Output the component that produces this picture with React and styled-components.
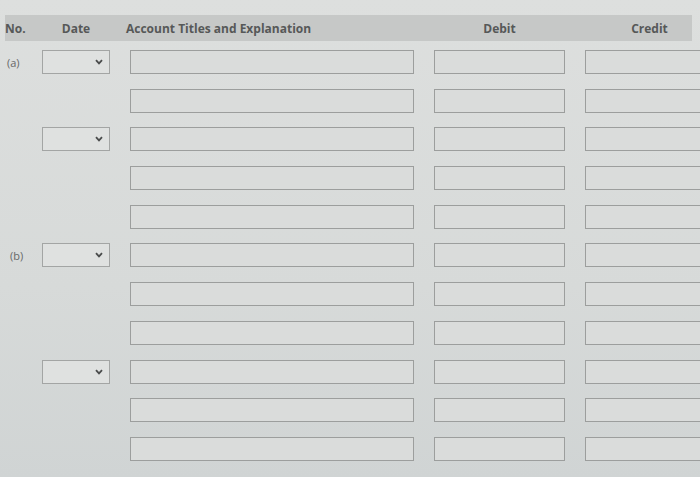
import React from 'react';
import styled, { createGlobalStyle } from 'styled-components';

const GlobalStyle = createGlobalStyle`
  html, body {
    margin: 0;
    padding: 0;
    background: #d6d8d7;
  }
  body {
    font-family: 'Open Sans', 'Liberation Sans', sans-serif;
    width: 700px;
    height: 477px;
    overflow: hidden;
  }
`;

const Page = styled.div`
  width: 700px;
  height: 477px;
  overflow: hidden;
  background: linear-gradient(180deg, #dddfde 0%, #d7dad9 60%, #d0d4d4 100%);
  padding-top: 15px;
  box-sizing: border-box;
`;

const Table = styled.div`
  display: grid;
  grid-template-columns: 17px 68px 284px 131px 120px;
  column-gap: 20px;
  margin-left: 5px;
  width: 700px;
`;

const HeaderBand = styled.div`
  grid-column: 1 / -1;
  display: grid;
  grid-template-columns: subgrid;
  align-items: center;
  height: 26px;
  background: #c6c8c7;
  margin-right: 13px;
`;

const HeadCell = styled.div`
  font-size: 12px;
  font-weight: 700;
  color: #565858;
  text-align: ${(p) => p.$align || 'left'};
  margin-left: ${(p) => p.$shift || 0}px;
  padding-left: ${(p) => p.$pad || 0}px;
  white-space: nowrap;
`;

const Body = styled.div`
  grid-column: 1 / -1;
  display: grid;
  grid-template-columns: subgrid;
  row-gap: 14.7px;
  margin-top: 9px;
`;

const Label = styled.div`
  font-size: 11px;
  color: #666868;
  display: flex;
  align-items: center;
  padding-left: ${(p) => p.$pad || 2}px;
  height: 24px;
  white-space: nowrap;
`;

const Field = styled.div`
  height: 24px;
  box-sizing: border-box;
  border: 1px solid #9c9e9d;
  background: #dadcdb;
`;

const Select = styled.div`
  height: 24px;
  box-sizing: border-box;
  border: 1px solid #a3a5a4;
  background: #dfe1e0;
  display: flex;
  align-items: center;
  justify-content: flex-end;
  padding-right: 6px;
`;

const Empty = styled.div``;

const Chevron = () => (
  <svg width="8" height="6" viewBox="0 0 8 6">
    <path d="M1 1.2 L4 4.4 L7 1.2" fill="none" stroke="#4a4c4c" strokeWidth="1.8" />
  </svg>
);

const rows = [
  { label: '(a)', date: true },
  {},
  { date: true },
  {},
  {},
  { label: '(b)', date: true, pad: 5 },
  {},
  {},
  { date: true },
  {},
  {},
];

const App = () => (
  <Page>
    <GlobalStyle />
    <Table>
      <HeaderBand>
        <HeadCell>No.</HeadCell>
        <HeadCell $align="center">Date</HeadCell>
        <HeadCell $shift={-4}>Account Titles and Explanation</HeadCell>
        <HeadCell $align="center">Debit</HeadCell>
        <HeadCell $align="center" $pad={22}>Credit</HeadCell>
      </HeaderBand>
      <Body>
        {rows.map((r, i) => (
          <React.Fragment key={i}>
            {r.label ? <Label $pad={r.pad}>{r.label}</Label> : <Empty />}
            {r.date ? (
              <Select>
                <Chevron />
              </Select>
            ) : (
              <Empty />
            )}
            <Field />
            <Field />
            <Field />
          </React.Fragment>
        ))}
      </Body>
    </Table>
  </Page>
);

export default App;
